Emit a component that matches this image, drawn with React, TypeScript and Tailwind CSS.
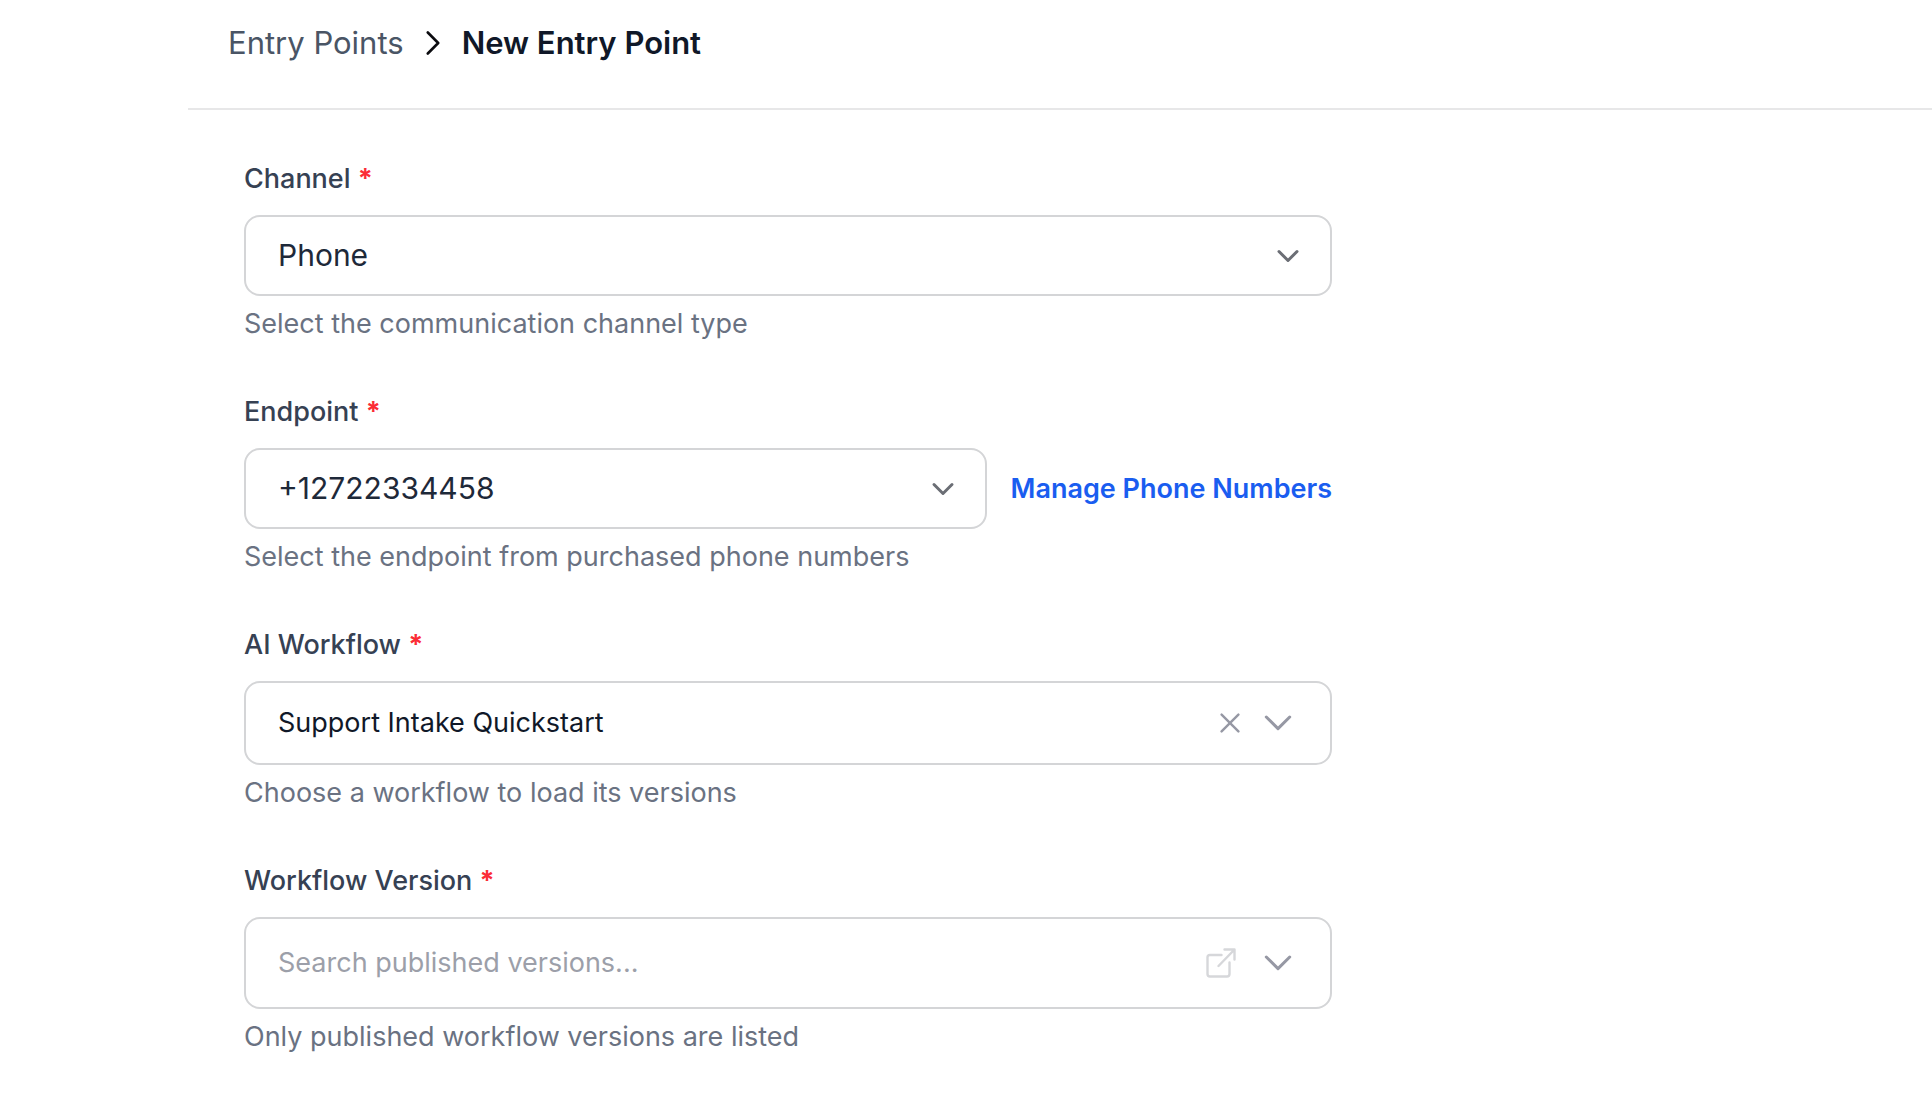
import React, { useState } from 'react';

interface FieldProps {
  id: string;
  label: string;
  hint: string;
  children: React.ReactNode;
}

const Field: React.FC<FieldProps> = ({ id, label, hint, children }) => (
  <div>
    <label htmlFor={id} className="block mb-4 text-[27px] leading-10 font-medium text-gray-700">
      {label} <span className="font-bold text-red-500">*</span>
    </label>
    {children}
    <p className="mt-2 text-[27px] leading-10 text-gray-500">{hint}</p>
  </div>
);

interface SelectProps {
  id: string;
  options: string[];
}

const Select: React.FC<SelectProps> = ({ id, options }) => (
  <div className="grid flex-1 min-w-0 items-center">
    <select
      id={id}
      className="col-start-1 row-start-1 w-full h-[81px] pl-8 pr-20 appearance-none bg-white border-2 border-[#d4d5d7] rounded-2xl text-[30px] text-gray-800"
    >
      {options.map((option) => (
        <option key={option}>{option}</option>
      ))}
    </select>
    <svg
      viewBox="0 0 24 14"
      className="col-start-1 row-start-1 justify-self-end mr-8 w-6 h-[14px] pointer-events-none"
      fill="none"
      stroke="#6b6e75"
      strokeWidth="3"
      strokeLinecap="round"
      strokeLinejoin="round"
    >
      <path d="M3 2.5 L12 11.5 L21 2.5" />
    </svg>
  </div>
);

const ChevronDown: React.FC = () => (
  <svg
    viewBox="0 0 28 16"
    className="w-7 h-4"
    fill="none"
    stroke="#9698a4"
    strokeWidth="3"
    strokeLinecap="round"
    strokeLinejoin="round"
  >
    <path d="M2.3 2 L14 13.6 L25.7 2" />
  </svg>
);

const App: React.FC = () => {
  const [workflow, setWorkflow] = useState('Support Intake Quickstart');
  const [version, setVersion] = useState('');

  return (
    <div className="min-h-screen bg-white pl-[188px] font-['Inter','Liberation_Sans',sans-serif]">
      <header className="border-b-2 border-[#e7e7e8] px-10 pt-[22px] pb-11">
        <nav
          aria-label="Breadcrumb"
          className="flex items-center gap-[22px] text-[31px] leading-[42px]"
        >
          <a href="#entry-points" className="text-gray-600">
            Entry Points
          </a>
          <svg
            viewBox="0 0 14 24"
            className="w-[14px] h-6"
            fill="none"
            stroke="#0b0b0f"
            strokeWidth="2.6"
            strokeLinecap="round"
            strokeLinejoin="round"
          >
            <path d="M1.8 1.5 L12.2 12 L1.8 22.5" />
          </svg>
          <h1 className="font-semibold text-gray-900">New Entry Point</h1>
        </nav>
      </header>

      <main className="px-14 py-[49px]">
        <form className="flex flex-col gap-12 max-w-[1088px]">
          <Field id="channel" label="Channel" hint="Select the communication channel type">
            <div className="flex">
              <Select id="channel" options={['Phone', 'Chat', 'Email']} />
            </div>
          </Field>

          <Field
            id="endpoint"
            label="Endpoint"
            hint="Select the endpoint from purchased phone numbers"
          >
            <div className="flex items-center gap-6">
              <Select id="endpoint" options={['+12722334458']} />
              <a href="#phone-numbers" className="text-[27px] leading-10 font-semibold text-[#1a5df0]">
                Manage Phone Numbers
              </a>
            </div>
          </Field>

          <Field id="workflow" label="AI Workflow" hint="Choose a workflow to load its versions">
            <div className="flex items-center h-[84px] pl-8 pr-[38px] border-2 border-[#d4d5d7] rounded-2xl">
              <input
                id="workflow"
                type="text"
                value={workflow}
                onChange={(e) => setWorkflow(e.target.value)}
                className="flex-1 min-w-0 text-[27px] text-gray-900 outline-none"
              />
              <button
                type="button"
                aria-label="Clear workflow"
                onClick={() => setWorkflow('')}
                className="mr-6"
              >
                <svg
                  viewBox="0 0 20 20"
                  className="w-5 h-5"
                  fill="none"
                  stroke="#9698a4"
                  strokeWidth="2.4"
                  strokeLinecap="round"
                >
                  <path d="M1.6 1.6 L18.4 18.4 M18.4 1.6 L1.6 18.4" />
                </svg>
              </button>
              <button type="button" aria-label="Show workflows">
                <ChevronDown />
              </button>
            </div>
          </Field>

          <Field
            id="version"
            label="Workflow Version"
            hint="Only published workflow versions are listed"
          >
            <div className="flex items-center h-[92px] pl-8 pr-[38px] border-2 border-[#d4d5d7] rounded-2xl">
              <input
                id="version"
                type="text"
                value={version}
                onChange={(e) => setVersion(e.target.value)}
                placeholder="Search published versions..."
                className="flex-1 min-w-0 text-[27px] text-gray-900 placeholder:text-[#9c9fa9] outline-none"
              />
              <button type="button" aria-label="Open version" className="mr-7">
                <svg
                  viewBox="0 0 30 30"
                  className="w-[30px] h-[30px]"
                  fill="none"
                  stroke="#d6d7da"
                  strokeWidth="2.4"
                  strokeLinecap="round"
                  strokeLinejoin="round"
                >
                  <path d="M15.5 7 H4 Q1.5 7 1.5 9.5 V26 Q1.5 28.5 4 28.5 H21 Q23.5 28.5 23.5 26 V14.5" />
                  <path d="M12.5 18 L28.5 1.5 M18.5 1.5 H28.5 V11.5" />
                </svg>
              </button>
              <button type="button" aria-label="Show versions">
                <ChevronDown />
              </button>
            </div>
          </Field>
        </form>
      </main>
    </div>
  );
};

export default App;
